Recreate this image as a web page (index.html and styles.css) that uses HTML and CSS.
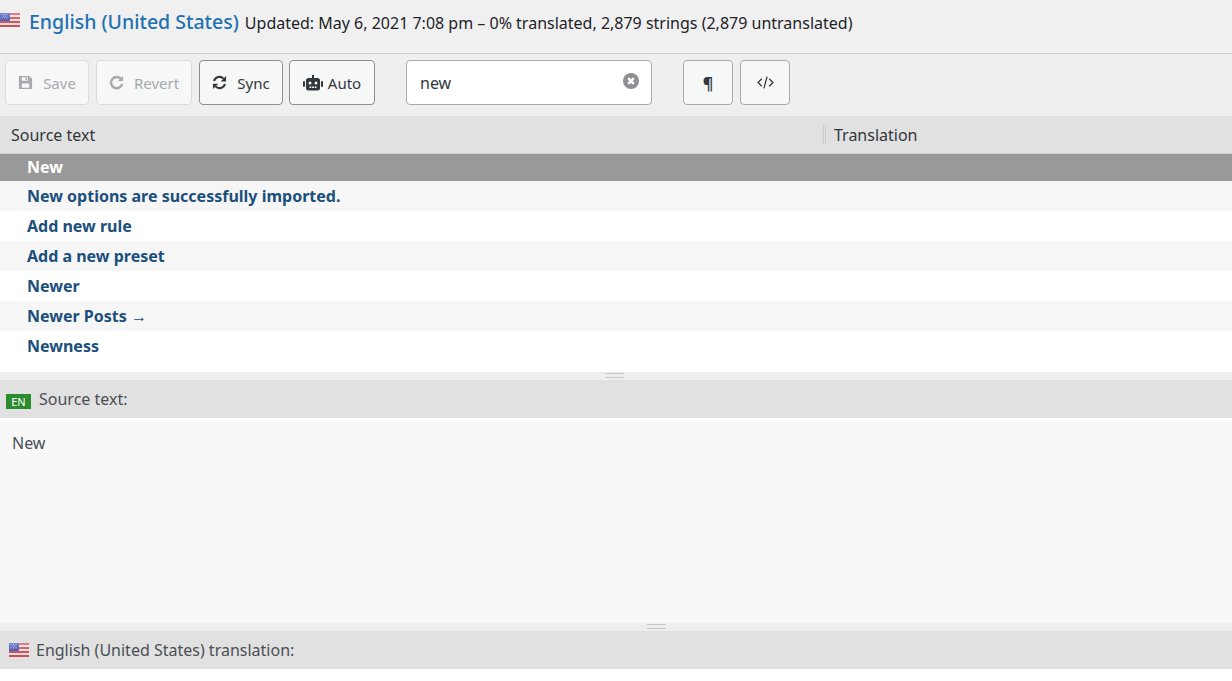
FILE: index.html
```html
<!DOCTYPE html>
<html lang="en">
<head>
<meta charset="utf-8">
<title>English (United States)</title>
<link rel="stylesheet" href="styles.css">
</head>
<body>
<svg class="defs" width="0" height="0" aria-hidden="true">
  <defs>
    <linearGradient id="shade" x1="0" y1="0" x2="0" y2="1">
      <stop offset="0" stop-color="#fff" stop-opacity=".25"/>
      <stop offset="1" stop-color="#000" stop-opacity=".08"/>
    </linearGradient>
    <symbol id="flag" viewBox="0 0 20 14">
      <rect width="20" height="14" fill="#f4f4f6"/>
      <rect y="0" width="20" height="2" fill="#e0545c"/>
      <rect y="4" width="20" height="2" fill="#e0545c"/>
      <rect y="8" width="20" height="2" fill="#e0545c"/>
      <rect y="12" width="20" height="2" fill="#e0545c"/>
      <rect width="10" height="8" fill="#4a5fc4"/>
      <path d="M1.5 1.5h1M4 1.5h1M6.5 1.5h1M2.8 3.2h1M5.2 3.2h1M1.5 4.9h1M4 4.9h1M6.5 4.9h1" stroke="#dfe3ff" stroke-width=".9"/>
      <rect width="20" height="14" fill="url(#shade)"/>
    </symbol>
  </defs>
</svg>

<header class="topbar">
  <svg class="flag flag-top"><use href="#flag"/></svg>
  <h1 class="title">English (United States)</h1>
  <p class="meta">Updated: May 6, 2021 7:08 pm – 0% translated, 2,879 strings (2,879 untranslated)</p>
</header>

<div class="toolbar">
  <button class="btn btn-save" disabled>
    <svg class="ico" viewBox="0 0 16 16"><path fill-rule="evenodd" d="M1 1h11l3 3v11H1zM4 2.5V6h6.5V2.5zM4 9v4.5h8V9zM8 3h1.6v2.4H8z"/></svg>
    <span>Save</span>
  </button>
  <button class="btn btn-revert" disabled>
    <svg class="ico" viewBox="0 0 16 16"><path fill="none" stroke="currentColor" stroke-width="2.6" d="M13 4.6A6 6 0 1 0 14 9.500"/><path d="M9.500 6.500H15V1z"/></svg>
    <span>Revert</span>
  </button>
  <button class="btn btn-sync">
    <svg class="ico" viewBox="0 0 16 16"><path fill="none" stroke="currentColor" stroke-width="2.200" d="M2.200 6.500A6 6 0 0 1 12.300 3.900M13.800 9.500A6 6 0 0 1 3.700 12.100"/><path d="M15 1v5.800H9.200zM1 15V9.200h5.800z"/></svg>
    <span>Sync</span>
  </button>
  <button class="btn btn-auto">
    <svg class="ico-robot" viewBox="0 0 20 16"><path fill-rule="evenodd" d="M9 0h2v3h3.500A2.500 2.500 0 0 1 17 5.500V13a2.500 2.500 0 0 1-2.500 2.500h-9A2.500 2.500 0 0 1 3 13V5.500A2.500 2.500 0 0 1 5.500 3H9zM7 6.500a1.500 1.500 0 1 0 0 3 1.500 1.500 0 0 0 0-3zm6 0a1.500 1.500 0 1 0 0 3 1.500 1.500 0 0 0 0-3zM6.500 11.500v1.500h1.800v-1.500zm2.600 0v1.500h1.800v-1.500zm2.600 0v1.500h1.800v-1.500z"/><rect x="0" y="6" width="2" height="6" rx="1"/><rect x="18" y="6" width="2" height="6" rx="1"/></svg>
    <span>Auto</span>
  </button>
  <div class="search">
    <input class="search-input" type="text" value="new" aria-label="Filter">
    <svg class="clear" viewBox="0 0 16 16"><circle cx="8" cy="8" r="8"/><path d="M5.200 5.200l5.600 5.600M10.800 5.200l-5.600 5.600" stroke="#fff" stroke-width="2.600"/></svg>
  </div>
  <button class="btn btn-icon btn-para"><span>¶</span></button>
  <button class="btn btn-icon btn-code">
    <svg class="ico-code" viewBox="0 0 16 12"><path fill="none" stroke="currentColor" stroke-width="1.200" d="M4.500 2.500L1 6l3.500 3.500M11.500 2.500L15 6l-3.500 3.500M9.500 .5L6.500 11.500"/></svg>
  </button>
</div>

<div class="columns">
  <div class="col col-source">Source text</div>
  <div class="col col-target">Translation</div>
</div>

<ul class="rows">
  <li class="row row-selected">New</li>
  <li class="row row-alt">New options are successfully imported.</li>
  <li class="row">Add new rule</li>
  <li class="row row-alt">Add a new preset</li>
  <li class="row">Newer</li>
  <li class="row row-alt">Newer Posts →</li>
  <li class="row">Newness</li>
</ul>

<div class="splitter"><span class="grip"></span></div>

<div class="pane-head pane-head-source">
  <span class="lang-badge">EN</span>
  <span>Source text:</span>
</div>
<div class="source-body">New</div>

<div class="splitter splitter-lower"><span class="grip"></span></div>

<div class="pane-head pane-head-target">
  <svg class="flag flag-pane"><use href="#flag"/></svg>
  <span>English (United States) translation:</span>
</div>
</body>
</html>
```
FILE: styles.css
```css
* { box-sizing: border-box; }
html, body { margin: 0; padding: 0; }
body {
  width: 1232px;
  height: 681px;
  overflow: hidden;
  background: #fff;
  color: #32373c;
  font-family: "Noto Sans", "Open Sans", sans-serif;
  font-size: 16px;
}
.defs { position: absolute; }

.topbar {
  height: 54px;
  background: #f0f0f0;
  border-bottom: 1px solid #ccc;
  display: flex;
  align-items: baseline;
  padding-top: 8px;
}
.flag { display: block; }
.flag-top { width: 20px; height: 14px; align-self: flex-start; margin-top: 5px; }
.title {
  margin: 0 6px 0 9px;
  font-size: 19.500px;
  font-weight: 500;
  line-height: 28px;
  color: #2271b1;
}
.meta { margin: 0; font-size: 16px; color: #1d2327; white-space: nowrap; }

.toolbar {
  height: 62px;
  background: #efefef;
  display: flex;
  align-items: flex-start;
  padding: 6px 0 0 5px;
}
.btn {
  height: 45px;
  display: flex;
  align-items: center;
  justify-content: center;
  background: #f6f7f7;
  border: 1px solid #8c8f94;
  border-radius: 4px;
  color: #32373c;
  font: inherit;
  font-size: 15px;
  padding: 0;
  margin-right: 6px;
}
.btn:disabled { border-color: #dcdcde; color: #a7aaad; }
.ico { width: 15px; height: 15px; fill: currentColor; margin-right: 10px; }
.ico-robot { width: 20px; height: 16px; fill: currentColor; margin-right: 5px; }
.btn-save { width: 84px; margin-right: 7px; }
.btn-revert { width: 96px; margin-right: 7px; }
.btn-sync { width: 84px; }
.btn-auto { width: 86px; margin-right: 31px; }
.btn-icon { width: 50px; border-color: #a7aaad; margin-right: 7px; }
.btn-para span { font-weight: 700; font-size: 16px; }
.ico-code { width: 17px; height: 13px; }

.search { position: relative; width: 246px; height: 45px; margin-right: 31px; }
.search-input {
  width: 100%;
  height: 100%;
  border: 1px solid #a7aaad;
  border-radius: 4px;
  background: #fff;
  color: #32373c;
  font: inherit;
  font-size: 16px;
  padding: 0 40px 0 13px;
}
.clear { position: absolute; right: 13px; top: 13px; width: 16px; height: 16px; fill: #8c8f94; }

.columns {
  height: 38px;
  background: #e1e1e1;
  border-bottom: 1px solid #d2d2d2;
  display: flex;
  align-items: center;
  font-size: 16px;
}
.col-source { width: 823px; padding-left: 11px; }
.col-target {
  padding-left: 8px;
  height: 20px;
  line-height: 20px;
  border-left: 3px double #ccc;
}

.rows { list-style: none; margin: 0; padding: 0 0 11px; }
.row {
  height: 30px;
  line-height: 30px;
  padding-left: 27px;
  font-size: 16px;
  font-weight: 700;
  color: #1b4f7c;
}
.row-alt { background: #f6f6f6; }
.row-selected { height: 27px; line-height: 27px; background: #999; color: #fff; }

.splitter {
  height: 8px;
  background: #eee;
  display: flex;
  justify-content: center;
  padding-left: 0;
}
.splitter .grip {
  width: 19px;
  height: 5px;
  margin: 1px 0 0 -4px;
  border-top: 1px solid #c8c8c8;
  border-bottom: 1px solid #c8c8c8;
}
.splitter-lower .grip { margin-left: 80px; }

.pane-head {
  height: 38px;
  background: #e1e1e1;
  display: flex;
  align-items: center;
  font-size: 16px;
  color: #4a4f55;
}
.pane-head-source { padding-left: 6px; border-bottom: 0; }
.lang-badge {
  width: 25px;
  height: 15px;
  margin: 4px 8px 0 0;
  background: #2c8a2f;
  color: #fff;
  font-size: 11px;
  line-height: 15px;
  text-align: center;
}
.source-body {
  height: 205px;
  background: #f8f8f8;
  border-top: 2px solid #fff;
  padding: 12px 12px;
  font-size: 16px;
  color: #4a4f55;
}
.flag-pane { width: 20px; height: 14px; margin-right: 7px; }
.pane-head-target { padding-left: 9px; }
```
